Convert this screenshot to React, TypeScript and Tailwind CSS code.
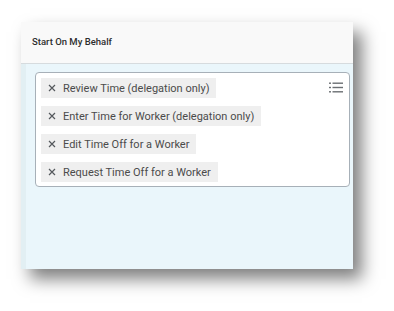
import React from 'react';

const items = [
  'Review Time (delegation only)',
  'Enter Time for Worker (delegation only)',
  'Edit Time Off for a Worker',
  'Request Time Off for a Worker',
];

const ListIcon = () => (
  <svg width="14" height="11" viewBox="0 0 14 11" className="text-[#6b6f73]">
    <rect x="0" y="0.5" width="2" height="1.4" fill="currentColor" />
    <rect x="3.5" y="0.5" width="10.5" height="1.4" fill="currentColor" />
    <rect x="0" y="4.8" width="2" height="1.4" fill="currentColor" />
    <rect x="3.5" y="4.8" width="10.5" height="1.4" fill="currentColor" />
    <rect x="0" y="9.1" width="2" height="1.4" fill="currentColor" />
    <rect x="3.5" y="9.1" width="10.5" height="1.4" fill="currentColor" />
  </svg>
);

const CloseIcon = () => (
  <svg width="8" height="8" viewBox="0 0 8 8" className="text-[#55595d]">
    <path d="M1 1 L7 7 M7 1 L1 7" stroke="currentColor" strokeWidth="1.2" />
  </svg>
);

export default function App() {
  return (
    <div className="w-[394px] h-[311px] bg-white pt-[22px] pl-[21px] font-['Roboto',sans-serif]">
      <div className="w-[332px] h-[247px] flex flex-col shadow-[9px_10px_16px_rgba(0,0,0,0.5)]">
        {/* header */}
        <div className="h-[42px] flex items-center px-[11px] bg-[#f9f9f9] border-b border-[#d6dbde]">
          <span className="text-[9.5px] font-medium text-[#2e2e2e]">Start On My Behalf</span>
        </div>

        {/* body */}
        <div className="flex-1 flex bg-[#eaf6fb]">
          <div className="w-[5px] bg-[#e2eff3]" />
          <div className="pt-[8px] pl-[9px]">
            <div className="w-[315px] h-[115px] rounded-[4px] border border-[#a7b0b8] bg-white relative pt-[5px] pl-[5px] flex flex-col gap-[8px]">
              {items.map((t) => (
                <div
                  key={t}
                  className="self-start h-[20px] flex items-center bg-[#efefef] pl-[7px] pr-[7px] gap-[7px]"
                >
                  <CloseIcon />
                  <span className="text-[11px] text-[#4b4b4b] leading-none">{t}</span>
                </div>
              ))}
              <div className="absolute right-[6px] top-[9px]">
                <ListIcon />
              </div>
            </div>
          </div>
        </div>
      </div>
    </div>
  );
}
